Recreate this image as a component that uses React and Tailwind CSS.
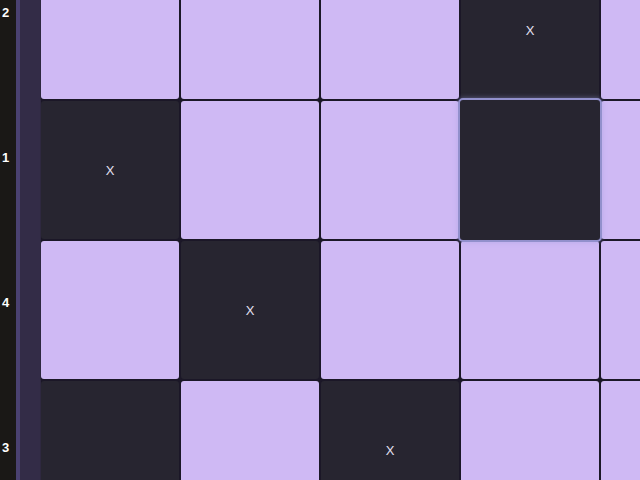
const ROWS = [
  ["L", "L", "L", "DX", "L"],
  ["DX", "L", "L", "DH", "L"],
  ["L", "DX", "L", "L", "L"],
  ["D", "L", "DX", "L", "L"],
];

const LABELS = ["2", "1", "4", "3"];

function Cell({ kind }) {
  if (kind === "L") return <div className="rounded-[3px] bg-[#cfb9f4]" />;
  if (kind === "DH")
    return (
      <div className="relative z-10 -m-[3px] rounded-[5px] bg-[#272530] border-2 border-[#9290cc] shadow-[0_0_5px_rgba(160,160,230,0.5)]" />
    );
  return (
    <div className="rounded-[3px] bg-[#272530] flex items-center justify-center">
      {kind === "DX" && (
        <span className="text-[13px] leading-none text-[#e4e0f2] [font-family:'Liberation_Sans',sans-serif]">
          X
        </span>
      )}
    </div>
  );
}

export default function App() {
  return (
    <div className="w-[640px] h-[480px] overflow-hidden flex bg-[#1a1816]">
      <div className="w-4 shrink-0 flex flex-col -mt-[60px]">
        {LABELS.map((l) => (
          <div
            key={l}
            className="h-[145px] shrink-0 flex items-center pl-[2px] text-[13px] font-bold text-white [font-family:'Liberation_Sans',sans-serif]"
          >
            {l}
          </div>
        ))}
      </div>
      <div className="w-1 shrink-0 bg-[#4a4170]" />
      <div className="w-5 shrink-0 bg-[#332c47]" />
      <div className="flex-1 overflow-hidden bg-[#2e283f] pl-px">
        <div className="-mt-[39px] grid grid-cols-[repeat(5,138px)] auto-rows-[138px] gap-[2px] bg-[#1b1727] w-max">
          {ROWS.flat().map((k, i) => (
            <Cell key={i} kind={k} />
          ))}
        </div>
      </div>
    </div>
  );
}
